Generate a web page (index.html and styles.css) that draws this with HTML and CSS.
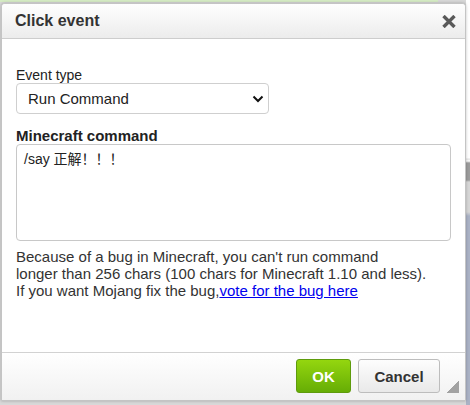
FILE: index.html
```html
<!DOCTYPE html>
<html lang="en">
<head>
    <meta charset="UTF-8">
    <title>Click event</title>
    <link rel="stylesheet" href="styles.css">
</head>
<body>
    <div class="dialog">
        <!-- header -->
        <div class="dialog-header">
            <span class="dialog-title">Click event</span>
            <svg class="close-icon" width="14" height="13" viewBox="0 0 14 13">
                <path d="M1.5 1 L12.5 12 M12.5 1 L1.5 12" stroke="#595959" stroke-width="3.4" stroke-linecap="butt"/>
            </svg>
        </div>

        <!-- body -->
        <div class="dialog-body">
            <label class="field-label">Event type</label>
            <div class="select-wrap">
                <select class="event-select">
                    <option>Run Command</option>
                </select>
                <svg class="select-arrow" width="12" height="8" viewBox="0 0 12 8">
                    <path d="M1.5 1.5 L6 6 L10.5 1.5" fill="none" stroke="#111" stroke-width="2"/>
                </svg>
            </div>

            <label class="field-label bold">Minecraft command</label>
            <textarea class="command-box">/say 正解！！！</textarea>

            <p class="help-text">
                Because of a bug in Minecraft, you can't run command<br>
                longer than 256 chars (100 chars for Minecraft 1.10 and less).<br>
                If you want Mojang fix the bug,<a href="#">vote for the bug here</a>
            </p>
        </div>

        <!-- footer -->
        <div class="dialog-footer">
            <button class="btn btn-ok">OK</button>
            <button class="btn btn-cancel">Cancel</button>
            <span class="resize-grip"></span>
        </div>
    </div>
</body>
</html>
```

FILE: styles.css
```css
body {
    margin: 0;
    height: 405px;
    overflow: hidden;
    font-family: "Liberation Sans", Arial, "Noto Sans CJK SC", sans-serif;
    color: #333;
    background:
        linear-gradient(#d5ebc4, #d5ebc4) no-repeat 0 0 / 438px 2px,
        linear-gradient(to bottom, #fff 0, #fff 158px, #e2e2e2 159px, #fff 161px, #9c9c9c 163px, #9c9c9c 180px, #d6d6d6 182px, #d6d6d6 212px, #aab2c5 216px) no-repeat right top / 4px 100%,
        #d8d8d8;
}

/* dialog */
.dialog {
    box-sizing: border-box;
    width: 465px;
    height: 398px;
    margin: 3px 0 0 1px;
    display: flex;
    flex-direction: column;
    background: #fff;
    border: 1px solid #c4c4c4;
    border-radius: 4px 4px 0 0;
    box-shadow: 0 0 3px rgba(0,0,0,0.25);
}

.dialog-header {
    height: 34px;
    padding: 0 9px 0 13px;
    display: flex;
    align-items: center;
    justify-content: space-between;
    background: linear-gradient(#fefefe, #ececec);
    border-bottom: 1px solid #cdcdcd;
    border-radius: 3px 3px 0 0;
}

.dialog-title {
    font-size: 16px;
    font-weight: bold;
    color: #333;
}

.close-icon {
    margin-top: 1px;
}

/* body */
.dialog-body {
    flex: 1;
    padding: 28px 14px 0 14px;
    display: flex;
    flex-direction: column;
    align-items: flex-start;
}

.field-label {
    font-size: 14px;
    line-height: 16px;
    color: #222;
}

.field-label.bold {
    margin-top: 13px;
    font-size: 15px;
    line-height: 17px;
    font-weight: bold;
}

.select-wrap {
    position: relative;
    display: flex;
}

.event-select {
    box-sizing: border-box;
    width: 253px;
    height: 31px;
    padding: 0 0 0 11px;
    appearance: none;
    -webkit-appearance: none;
    background: #fff;
    border: 1px solid #cfcfcf;
    border-radius: 4px;
    font-family: inherit;
    font-size: 15px;
    color: #222;
}

.select-arrow {
    position: absolute;
    right: 5px;
    top: 12px;
    pointer-events: none;
}

.command-box {
    box-sizing: border-box;
    width: 435px;
    height: 97px;
    padding: 6px 7px;
    margin: 0;
    resize: none;
    border: 1px solid #c8c8c8;
    border-radius: 4px;
    font-family: "Liberation Sans", Arial, "Noto Sans CJK SC", sans-serif;
    font-size: 14px;
    line-height: 17px;
    color: #222;
}

.help-text {
    margin: 7px 0 0;
    font-size: 15px;
    line-height: 17px;
    color: #333;
}

.help-text a {
    color: #0000ee;
}

/* footer */
.dialog-footer {
    box-sizing: border-box;
    height: 48px;
    padding: 6px 25px 0 0;
    display: flex;
    align-items: flex-start;
    justify-content: flex-end;
    gap: 7px;
    position: relative;
    background: linear-gradient(#fff, #f1f1f1);
    border-top: 1px solid #d2d2d2;
}

.btn {
    height: 34px;
    font-family: inherit;
    font-size: 15px;
    font-weight: bold;
    border-radius: 3px;
    cursor: pointer;
}

.btn-ok {
    width: 55px;
    color: #fff;
    background: linear-gradient(#94d60f, #66ad05);
    border: 1px solid #5e9b0c;
}

.btn-cancel {
    width: 82px;
    color: #333;
    background: linear-gradient(#fdfdfd, #e9e9e9);
    border: 1px solid #bdbdbd;
}

.resize-grip {
    position: absolute;
    right: 6px;
    bottom: 7px;
    width: 13px;
    height: 12px;
    background: linear-gradient(to bottom right, transparent 50%, #a2a2a2 50%);
}
```
